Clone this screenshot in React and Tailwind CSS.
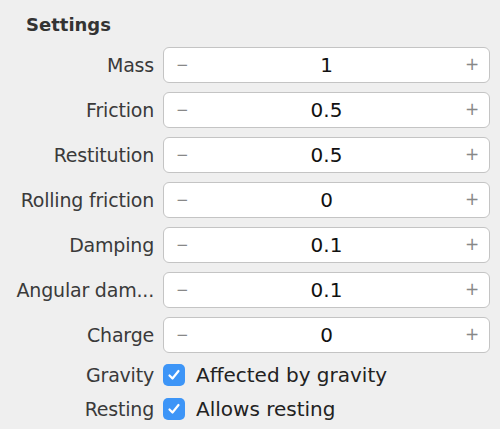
import { useState } from "react";

const fields = [
  { label: "Mass", value: "1" },
  { label: "Friction", value: "0.5" },
  { label: "Restitution", value: "0.5" },
  { label: "Rolling friction", value: "0" },
  { label: "Damping", value: "0.1" },
  { label: "Angular dam...", value: "0.1" },
  { label: "Charge", value: "0" },
];

function Check({ checked, onChange }) {
  return (
    <button
      onClick={onChange}
      className="w-[22px] h-[22px] rounded-[5px] bg-[#3d95f7] flex items-center justify-center shrink-0"
    >
      {checked && (
        <svg width="14" height="14" viewBox="0 0 14 14">
          <path d="M2.5 7.5 L5.5 10.5 L11.5 3" fill="none" stroke="white" strokeWidth="2.2" strokeLinecap="round" strokeLinejoin="round" />
        </svg>
      )}
    </button>
  );
}

export default function App() {
  const [gravity, setGravity] = useState(true);
  const [resting, setResting] = useState(true);

  return (
    <div className="w-[500px] h-[429px] bg-[#efefef] text-[#2a2a2a] font-['DejaVu_Sans',sans-serif] pt-[13px] overflow-hidden">
      <h2 className="pl-[26px] text-[18px] font-bold text-[#333] leading-[24px]">Settings</h2>

      <div className="mt-[10px] flex flex-col gap-[9px]">
        {fields.map((f) => (
          <div key={f.label} className="flex items-center">
            <div className="w-[163px] pr-[9px] text-right text-[19px] text-[#3a3a3a] whitespace-nowrap tracking-[-0.2px]">{f.label}</div>
            <div className="w-[327px] h-[36px] bg-white border-[1.5px] border-[#c4c4c4] rounded-[6px] flex items-center px-[12px]">
              <span className="text-[#888] text-[15px] w-[12px]">−</span>
              <span className="flex-1 text-center text-[20px] text-[#111]">{f.value}</span>
              <span className="text-[#888] text-[17px] w-[12px] text-right">+</span>
            </div>
          </div>
        ))}
      </div>

      <div className="mt-[11px] flex flex-col gap-[12px]">
        <div className="flex items-center h-[22px]">
          <div className="w-[163px] pr-[9px] text-right text-[19px] text-[#3a3a3a] tracking-[-0.2px]">Gravity</div>
          <Check checked={gravity} onChange={() => setGravity(!gravity)} />
          <span className="ml-[11px] text-[20px] text-[#222]">Affected by gravity</span>
        </div>
        <div className="flex items-center h-[22px]">
          <div className="w-[163px] pr-[9px] text-right text-[19px] text-[#3a3a3a] tracking-[-0.2px]">Resting</div>
          <Check checked={resting} onChange={() => setResting(!resting)} />
          <span className="ml-[11px] text-[20px] text-[#222]">Allows resting</span>
        </div>
      </div>
    </div>
  );
}
